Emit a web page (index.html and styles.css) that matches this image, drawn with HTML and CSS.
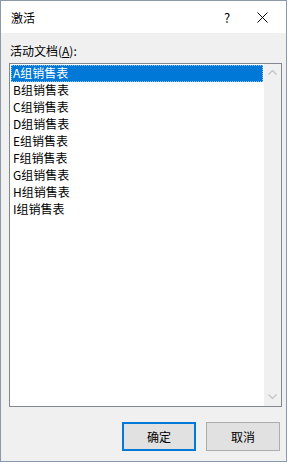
FILE: index.html
```html
<!DOCTYPE html>
<html lang="zh-CN">
<head>
  <meta charset="UTF-8" />
  <title>激活</title>
  <link rel="stylesheet" href="styles.css">
</head>
<body>

  <div class="dialog">
    <div class="titlebar">
      <span class="title">激活</span>
      <span class="help">?</span>
      <span class="close">
        <svg width="11" height="11" viewBox="0 0 11 11">
          <path d="M0.5 0.5 L10.5 10.5 M10.5 0.5 L0.5 10.5" stroke="#000" stroke-width="1" fill="none"/>
        </svg>
      </span>
    </div>

    <div class="content">
      <label class="field-label">活动文档(<u>A</u>):</label>

      <div class="listbox">
        <ul class="items">
          <li class="selected">A组销售表</li>
          <li>B组销售表</li>
          <li>C组销售表</li>
          <li>D组销售表</li>
          <li>E组销售表</li>
          <li>F组销售表</li>
          <li>G组销售表</li>
          <li>H组销售表</li>
          <li>I组销售表</li>
        </ul>
        <div class="scrollbar">
          <svg width="9" height="5" viewBox="0 0 9 5">
            <path d="M0.5 4.5 L4.5 0.5 L8.5 4.5" stroke="#c2c2c2" stroke-width="1.2" fill="none"/>
          </svg>
          <svg width="9" height="5" viewBox="0 0 9 5">
            <path d="M0.5 0.5 L4.5 4.5 L8.5 0.5" stroke="#c2c2c2" stroke-width="1.2" fill="none"/>
          </svg>
        </div>
      </div>

      <div class="buttons">
        <button class="default">确定</button>
        <button>取消</button>
      </div>
    </div>
  </div>

</body>
</html>
```

FILE: styles.css
```css
html, body {
  margin: 0;
  padding: 0;
  background-color: #ffffff;
  font-family: "Noto Sans CJK SC", sans-serif;
  font-size: 12px;
  color: #000000;
}

.dialog {
  width: 285px;
  height: 460px;
  border: 1px solid #8d99aa;
  display: flex;
  flex-direction: column;
}

.titlebar {
  height: 32px;
  background-color: #ffffff;
  display: flex;
  align-items: center;
  padding-left: 10px;
}

.title {
  flex: 1;
  line-height: 17px;
}

.help {
  width: 16px;
  text-align: center;
  font-size: 13px;
  margin-right: 22px;
}

.close {
  display: flex;
  margin-right: 18px;
}

.content {
  flex: 1;
  background-color: #f0f0f0;
  padding: 9px 4px 10px 8px;
  display: flex;
  flex-direction: column;
}

.field-label {
  display: block;
  line-height: 17px;
  margin-left: 1px;
}

.listbox {
  margin-top: 4px;
  height: 342px;
  border: 1px solid #828790;
  background-color: #ffffff;
  display: flex;
}

.items {
  flex: 1;
  list-style: none;
  margin: 0;
  padding: 1px;
}

.items li {
  height: 17px;
  line-height: 16px;
  padding-left: 2px;
}

.items li.selected {
  background-color: #0078d7;
  color: #ffffff;
  outline: 1px dotted #8cbdeb;
  outline-offset: -1px;
}

.scrollbar {
  width: 17px;
  background-color: #f0f0f0;
  display: flex;
  flex-direction: column;
  justify-content: space-between;
  align-items: center;
  padding: 6px 0 7px;
}

.buttons {
  margin-top: 15px;
  display: flex;
  justify-content: flex-end;
  gap: 10px;
  padding-right: 2px;
}

button {
  width: 74px;
  height: 29px;
  background-color: #e1e1e1;
  border: 1px solid #adadad;
  font-family: "Noto Sans CJK SC", sans-serif;
  font-size: 12px;
  color: #000000;
  padding: 0;
}

button.default {
  border: 2px solid #0078d7;
}
```
